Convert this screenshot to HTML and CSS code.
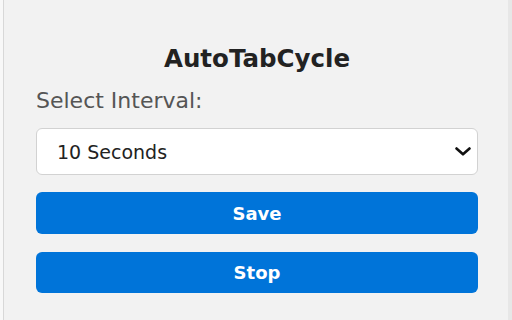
FILE: index.html
```html
<!DOCTYPE html>
<html lang="en">
<head>
<meta charset="utf-8">
<title>AutoTabCycle</title>
<link rel="stylesheet" href="styles.css">
</head>
<body>
<div class="frame">
  <h1 class="title">AutoTabCycle</h1>
  <label class="label" for="interval">Select Interval:</label>
  <div class="select-wrap">
    <select id="interval" class="select">
      <option>10 Seconds</option>
      <option>30 Seconds</option>
      <option>1 Minute</option>
    </select>
    <svg class="chevron" width="16" height="9" viewBox="0 0 16 9" aria-hidden="true">
      <polyline points="1.5,1.5 8,7.3 14.5,1.5" fill="none" stroke="#111" stroke-width="2.6" stroke-linecap="round" stroke-linejoin="round"/>
    </svg>
  </div>
  <button class="btn btn-save">Save</button>
  <button class="btn btn-stop">Stop</button>
</div>
</body>
</html>
```

FILE: styles.css
```css
html {
  background: #f8f8f8;
}
body {
  margin: 0;
  font-family: "DejaVu Sans", "Liberation Sans", sans-serif;
}
.frame {
  box-sizing: border-box;
  margin-left: 3px;
  min-height: 320px;
  border-left: 1px solid #d8d8d8;
  border-right: 4px solid #e7e7e7;
  background: #f2f2f2;
  padding: 45px 30px 0 32px;
  display: flex;
  flex-direction: column;
}
.title {
  margin: 0;
  font-size: 24.5px;
  line-height: 28px;
  font-weight: bold;
  color: #222;
  text-align: center;
}
.label {
  margin-top: 15px;
  font-size: 22px;
  line-height: 26px;
  color: #555;
}
.select-wrap {
  position: relative;
  margin-top: 14px;
}
.select {
  appearance: none;
  -webkit-appearance: none;
  box-sizing: border-box;
  width: 100%;
  height: 47px;
  margin: 0;
  padding: 0 0 0 20px;
  border: 1px solid #d2d2d2;
  border-radius: 6px;
  background: #fff;
  font-family: "DejaVu Sans", "Liberation Sans", sans-serif;
  font-size: 19px;
  color: #222;
}
.chevron {
  position: absolute;
  right: 7px;
  top: 19px;
}
.btn {
  box-sizing: border-box;
  width: 100%;
  height: 42px;
  border: none;
  border-radius: 6px;
  background: #0074d9;
  color: #fff;
  font-family: "DejaVu Sans", "Liberation Sans", sans-serif;
  font-size: 18px;
  font-weight: bold;
  padding: 0;
}
.btn-save {
  margin-top: 17px;
}
.btn-stop {
  margin-top: 18px;
  height: 41px;
}
```
